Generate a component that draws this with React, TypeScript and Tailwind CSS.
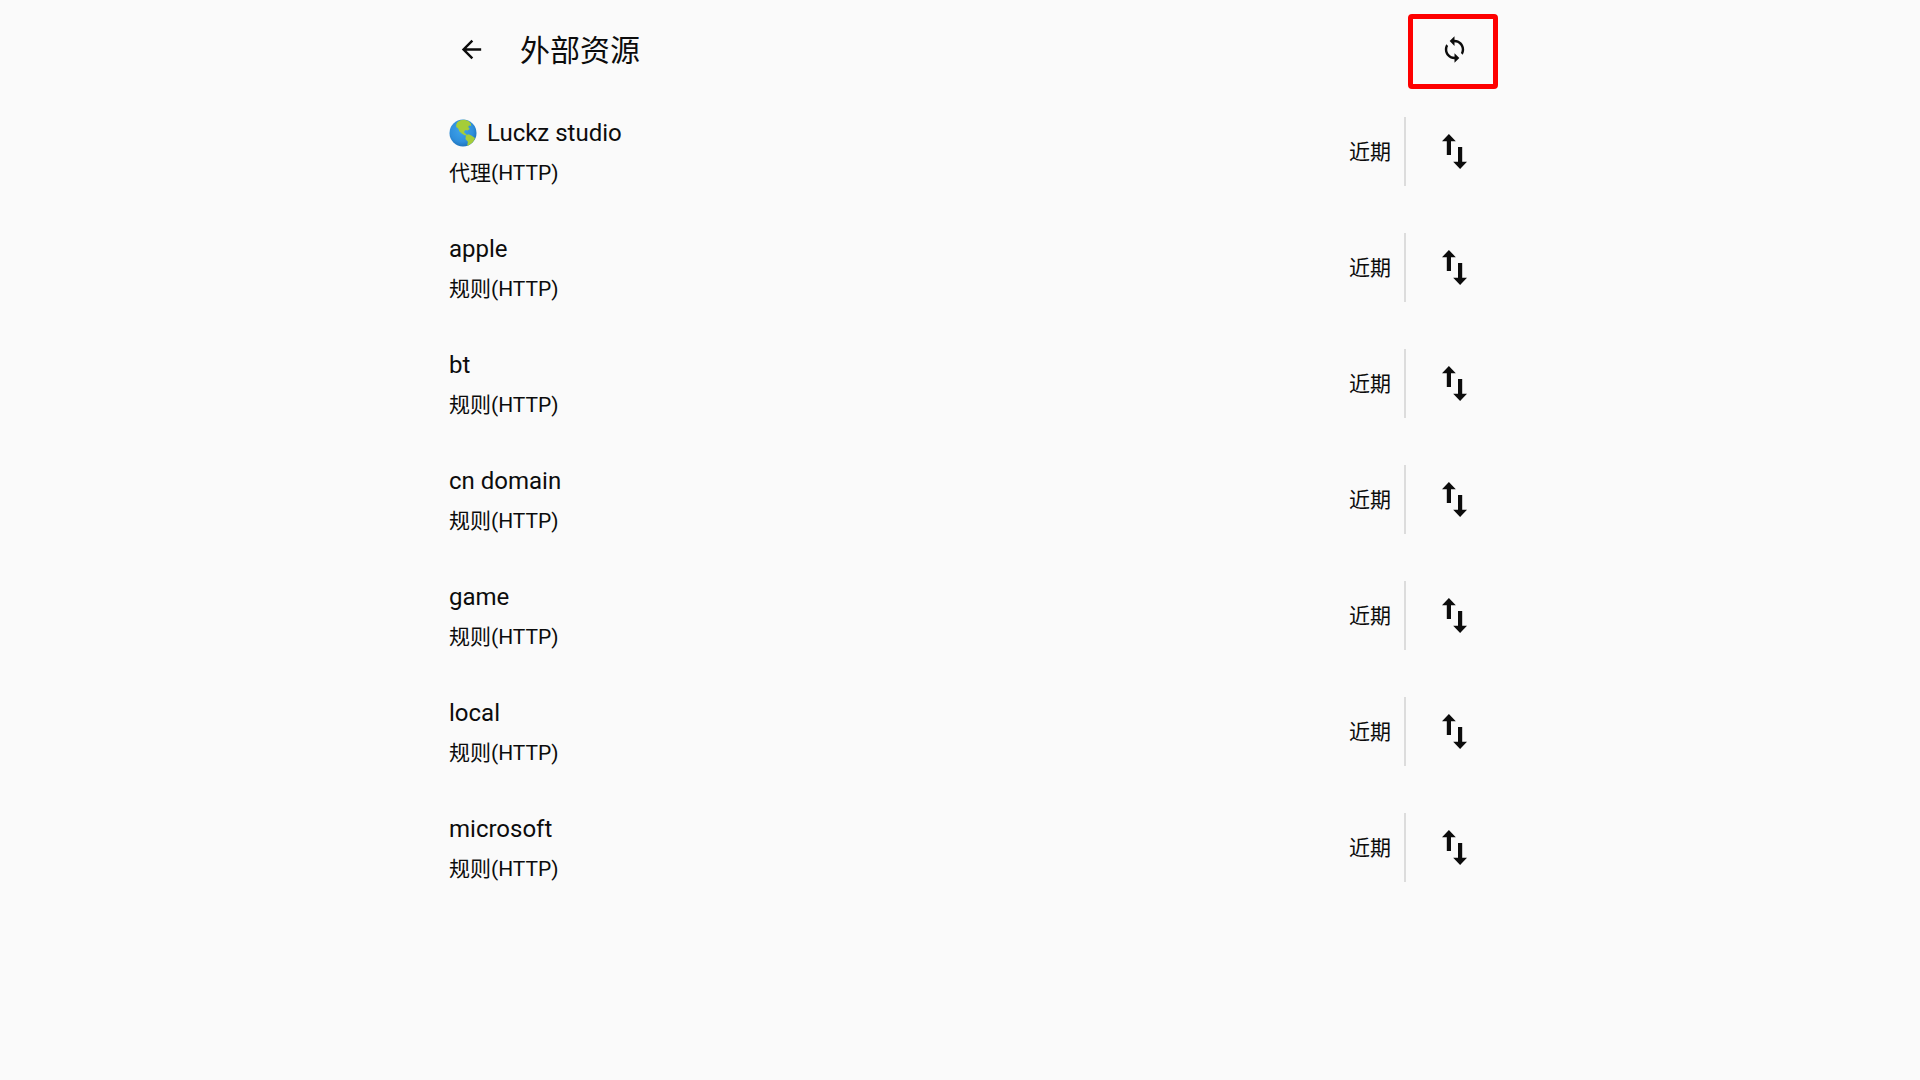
type Provider = {
  name: string;
  type: string;
  globe?: boolean;
};

const providers: Provider[] = [
  { name: "Luckz studio", type: "代理(HTTP)", globe: true },
  { name: "apple", type: "规则(HTTP)" },
  { name: "bt", type: "规则(HTTP)" },
  { name: "cn domain", type: "规则(HTTP)" },
  { name: "game", type: "规则(HTTP)" },
  { name: "local", type: "规则(HTTP)" },
  { name: "microsoft", type: "规则(HTTP)" },
];

function BackIcon() {
  return (
    <svg viewBox="0 0 24 24" className="h-[29px] w-[29px]" fill="currentColor" aria-hidden="true">
      <path d="M20 11H7.83l5.59-5.59L12 4l-8 8 8 8 1.41-1.41L7.83 13H20v-2z" />
    </svg>
  );
}

function SyncIcon() {
  return (
    <svg viewBox="0 0 24 24" className="h-[29px] w-[29px]" fill="currentColor" aria-hidden="true">
      <path d="M12 4V1L8 5l4 4V6c3.31 0 6 2.69 6 6 0 1.01-.25 1.97-.7 2.8l1.46 1.46C19.54 15.03 20 13.57 20 12c0-4.42-3.58-8-8-8zm0 14c-3.31 0-6-2.69-6-6 0-1.01.25-1.97.7-2.8L5.24 7.74C4.46 8.97 4 10.43 4 12c0 4.42 3.58 8 8 8v3l4-4-4-4v3z" />
    </svg>
  );
}

function SwapIcon() {
  return (
    <svg viewBox="0 0 25 35" className="h-[35px] w-[25px]" fill="currentColor" aria-hidden="true">
      <path d="M6.900 0L13.800 7.200H9V21H4.800V7.200H0z" />
      <path d="M18.100 35L11.200 27.800H16V13h4.200v14.800h4.800z" />
    </svg>
  );
}

function GlobeIcon() {
  return (
    <svg viewBox="0 0 28 28" className="h-7 w-7" aria-hidden="true">
      <defs>
        <radialGradient id="sea" cx="0.45" cy="0.4" r="0.6">
          <stop offset="0" stopColor="#3fa4ea" />
          <stop offset="0.7" stopColor="#2f8fdc" />
          <stop offset="1" stopColor="#1f74bd" />
        </radialGradient>
      </defs>
      <circle cx="14" cy="14" r="13.5" fill="url(#sea)" />
      <path
        d="M7.200 5.500L8.500 2.900L11.500 1.300L15.500 .8L19.500 2L21.800 4.500L22.200 7L20 6.500L19.200 8L20.800 10L18.500 11.400L16.500 11L15 12.600L15.600 14L17.500 15.200L17.800 16.600L15.500 16.200L13 14.800L10.500 12.500L9.200 9.500L7.200 8z"
        fill="#a5cd39"
      />
      <path
        d="M17 16.300L19.500 15.300L22.300 16.600L26 18.900C25.400 21 24 23 22.300 24.500L19.300 26.400L18.200 26.300L18.900 22.800L16.400 20z"
        fill="#a5cd39"
      />
    </svg>
  );
}

function ProviderRow({ provider }: { provider: Provider }) {
  return (
    <li className="flex h-[116px] items-center pl-8">
      <div className="min-w-0 flex-1 pt-1">
        <h2 className="flex items-center gap-2.5 text-2xl leading-10">
          {provider.globe ? <GlobeIcon /> : null}
          {provider.name}
        </h2>
        <p className="text-[21px] leading-10">{provider.type}</p>
      </div>
      <span className="pt-1 pr-[13px] text-[21px]">近期</span>
      <button
        type="button"
        aria-label={`更新 ${provider.name}`}
        className="flex h-[69px] w-[99px] items-center justify-center border-l-2 border-[#dcdcdc]"
      >
        <SwapIcon />
      </button>
    </li>
  );
}

export default function App() {
  return (
    <div className="min-h-screen bg-[#fafafa] font-['Roboto','Noto_Sans_CJK_SC',sans-serif] text-[#0c0c0c]">
      <main className="mx-auto max-w-[1086px]">
        <header className="flex items-center justify-between pt-3.5 pr-[5px] pb-1 pl-10">
          <div className="flex items-center gap-[34px] pb-1">
            <button type="button" aria-label="返回">
              <BackIcon />
            </button>
            <h1 className="pt-0.5 text-[30px] leading-10">外部资源</h1>
          </div>
          <button
            type="button"
            aria-label="全部更新"
            className="flex h-[75px] w-[90px] items-center justify-center rounded-sm border-[5px] border-[#fe0000] pb-1 pl-0.5"
          >
            <SyncIcon />
          </button>
        </header>

        <ul>
          {providers.map((provider) => (
            <ProviderRow key={provider.name} provider={provider} />
          ))}
        </ul>
      </main>
    </div>
  );
}
